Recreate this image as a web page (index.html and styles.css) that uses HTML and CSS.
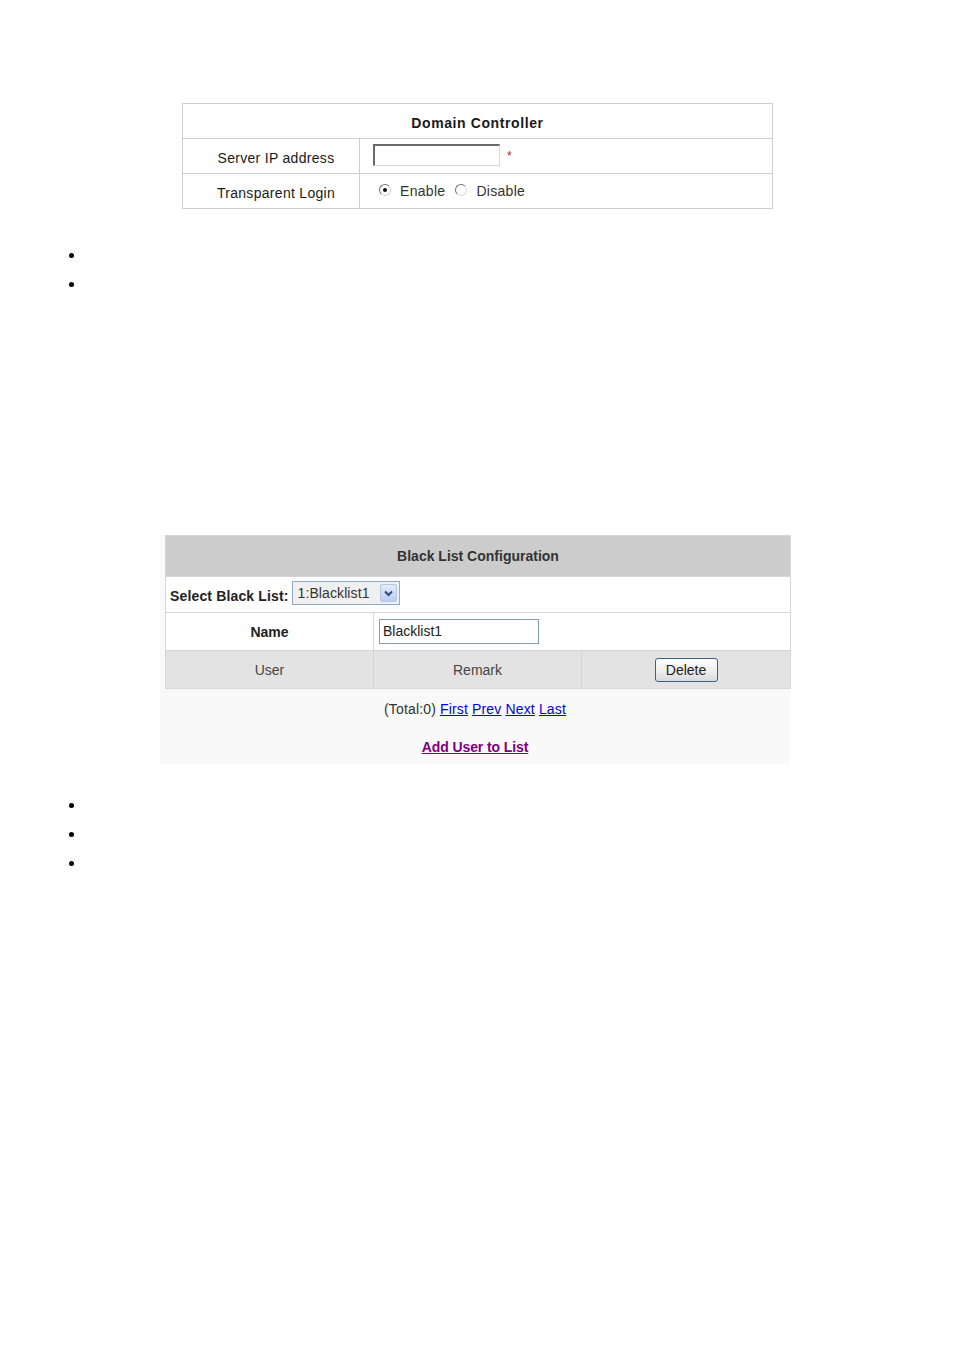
FILE: index.html
```html
<!DOCTYPE html>
<html>
<head>
<meta charset="utf-8">
<link rel="stylesheet" href="styles.css">
</head>
<body>
<div class="page">
  <table class="dc">
    <tr><th colspan="2" class="dc-head">Domain Controller</th></tr>
    <tr>
      <td class="dc-label">Server IP address</td>
      <td class="dc-val"><span class="ipbox"></span><span class="req">*</span></td>
    </tr>
    <tr>
      <td class="dc-label">Transparent Login</td>
      <td class="dc-val">
        <span class="radio on"></span><span class="rlabel">Enable</span><span class="radio"></span><span class="rlabel">Disable</span>
      </td>
    </tr>
  </table>

  <div class="bullets b1">
    <div class="bullet"></div>
    <div class="bullet"></div>
  </div>

  <div class="bl-wrap">
    <table class="bl">
      <tr><th colspan="3" class="bl-head">Black List Configuration</th></tr>
      <tr>
        <td colspan="3" class="bl-select-row">
          <span class="bold sel-label">Select Black List:</span>
          <span class="select"><span class="select-text">1:Blacklist1</span><span class="select-btn"><svg width="9" height="7" viewBox="0 0 9 7"><path d="M1 1.5 L4.5 5 L8 1.5" fill="none" stroke="#2d4a7a" stroke-width="2"/></svg></span></span>
        </td>
      </tr>
      <tr class="name-row">
        <td class="name-label bold">Name</td>
        <td colspan="2" class="name-val"><span class="namebox">Blacklist1</span></td>
      </tr>
      <tr class="col-row">
        <td class="c1">User</td>
        <td class="c2">Remark</td>
        <td class="c3"><span class="btn">Delete</span></td>
      </tr>
    </table>
    <div class="pager">(Total:0) <a href="#">First</a> <a href="#">Prev</a> <a href="#">Next</a> <a href="#">Last</a></div>
    <div class="addlink"><a href="#">Add User to List</a></div>
  </div>

  <div class="bullets b2">
    <div class="bullet"></div>
    <div class="bullet"></div>
    <div class="bullet"></div>
  </div>
</div>
</body>
</html>
```
FILE: styles.css
```css
html, body {
  margin: 0;
  padding: 0;
  background: #ffffff;
}
body {
  font-family: "Liberation Sans", Arial, sans-serif;
  color: #111;
}
.page {
  width: 954px;
  height: 1350px;
  padding-top: 103px;
  box-sizing: border-box;
}
.bold { font-weight: bold; }

/* Domain controller table */
.dc {
  margin-left: 182px;
  width: 591px;
  border-collapse: collapse;
  font-size: 14px;
  color: #1a1a1a;
  letter-spacing: 0.3px;
}
.dc th, .dc td {
  border: 1px solid #cfcfcf;
  padding: 0;
}
.dc .dc-head {
  height: 31px;
  font-weight: bold;
  text-align: center;
  vertical-align: middle;
  padding-top: 3px;
  letter-spacing: 0.6px;
}
.dc .dc-label {
  width: 166px;
  height: 31px;
  text-align: center;
  vertical-align: middle;
  padding-top: 3px;
  padding-left: 10px;
}
.dc .dc-val {
  vertical-align: middle;
  padding-left: 13px;
}
.ipbox {
  display: inline-block;
  vertical-align: middle;
  box-sizing: border-box;
  width: 127px;
  height: 22px;
  border-top: 2px solid #6a6a6a;
  border-left: 2px solid #6a6a6a;
  border-right: 1px solid #d8d8d8;
  border-bottom: 1px solid #d8d8d8;
  background: #fff;
  margin-top: -2px;
}
.req {
  color: #b22222;
  font-size: 12px;
  margin-left: 7px;
  vertical-align: middle;
  position: relative;
  top: 0px;
}
.radio {
  display: inline-block;
  box-sizing: border-box;
  width: 12px;
  height: 12px;
  border: 1px solid #707070;
  border-right-color: #d8d8d8;
  border-bottom-color: #d8d8d8;
  border-radius: 50%;
  vertical-align: middle;
  position: relative;
  margin-left: 6px;
  margin-top: -4px;
}
.radio.on::after {
  content: "";
  position: absolute;
  left: 3px;
  top: 3px;
  width: 4px;
  height: 4px;
  border-radius: 50%;
  background: #111;
}
.rlabel {
  margin-left: 9px;
  margin-right: 4px;
  color: #333;
}

/* bullets */
.bullets {
  padding-left: 69px;
}
.bullet {
  width: 5px;
  height: 5px;
  border-radius: 50%;
  background: #000;
  margin-bottom: 24px;
}
.b1 { padding-top: 44px; }
.b1 .bullet:last-child { margin-bottom: 0; }
.b2 { padding-top: 39px; }

/* black list */
.bl-wrap {
  margin-top: 248px;
  margin-left: 160px;
  width: 630px;
  background: #f9f9f9;
  padding-bottom: 5px;
}
.bl {
  margin-left: 5px;
  width: 626px;
  border-collapse: collapse;
  font-size: 14px;
  color: #333;
  background: #fff;
}
.bl th, .bl td {
  border: 1px solid #d6d6d6;
  padding: 0;
}
.bl .bl-head {
  height: 40px;
  background: #cccccc;
  font-weight: bold;
  text-align: center;
  vertical-align: middle;
  color: #333;
  letter-spacing: 0px;
}
.bl .bl-select-row {
  height: 35px;
  padding-left: 4px;
  vertical-align: middle;
  color: #222;
}
.sel-label {
  font-size: 14px;
  letter-spacing: 0.15px;
  vertical-align: middle;
  position: relative;
  top: 1px;
}
.select {
  display: inline-flex;
  align-items: center;
  box-sizing: border-box;
  width: 108px;
  height: 24px;
  border: 1px solid #8fa9c9;
  background: #f0f0f0;
  vertical-align: middle;
  margin-left: -1px;
  margin-top: -3px;
}
.select-text {
  flex: 1;
  padding-left: 5px;
  font-size: 14px;
  color: #333;
  letter-spacing: 0.1px;
}
.select-btn {
  width: 17px;
  height: 18px;
  margin-right: 2px;
  box-sizing: border-box;
  border: 1px solid #b3c6e3;
  background: linear-gradient(#e4ecfa, #bccdef);
  border-radius: 2px;
  display: flex;
  align-items: center;
  justify-content: center;
}
.name-row td {
  height: 37px;
  vertical-align: middle;
}
.bl .name-label {
  width: 207px;
  text-align: center;
  color: #222;
}
.bl .name-val {
  padding-left: 5px;
}
.namebox {
  display: inline-block;
  box-sizing: border-box;
  width: 160px;
  height: 25px;
  border: 1px solid #7f9db9;
  padding: 3px 0 0 3px;
  font-size: 14px;
  color: #222;
  vertical-align: middle;
}
.col-row td {
  height: 37px;
  background: #e3e3e3;
  text-align: center;
  vertical-align: middle;
  color: #444;
}
.col-row .c1, .col-row .c2 { width: 207px; }
.btn {
  display: inline-block;
  box-sizing: border-box;
  width: 63px;
  height: 24px;
  border: 1px solid #3d5f85;
  border-radius: 3px;
  background: linear-gradient(#ffffff, #ececec 60%, #dadada);
  font-size: 14px;
  line-height: 22px;
  color: #222;
  vertical-align: middle;
}
.pager {
  text-align: center;
  font-size: 14px;
  color: #333;
  margin-top: 12px;
  letter-spacing: 0.15px;
}
.pager a {
  color: #0000ee;
  text-decoration: underline;
}
.addlink {
  text-align: center;
  margin-top: 22px;
  font-size: 14px;
  font-weight: bold;
  letter-spacing: -0.1px;
  padding-bottom: 4px;
}
.addlink a {
  color: #800080;
  text-decoration: underline;
}
```
